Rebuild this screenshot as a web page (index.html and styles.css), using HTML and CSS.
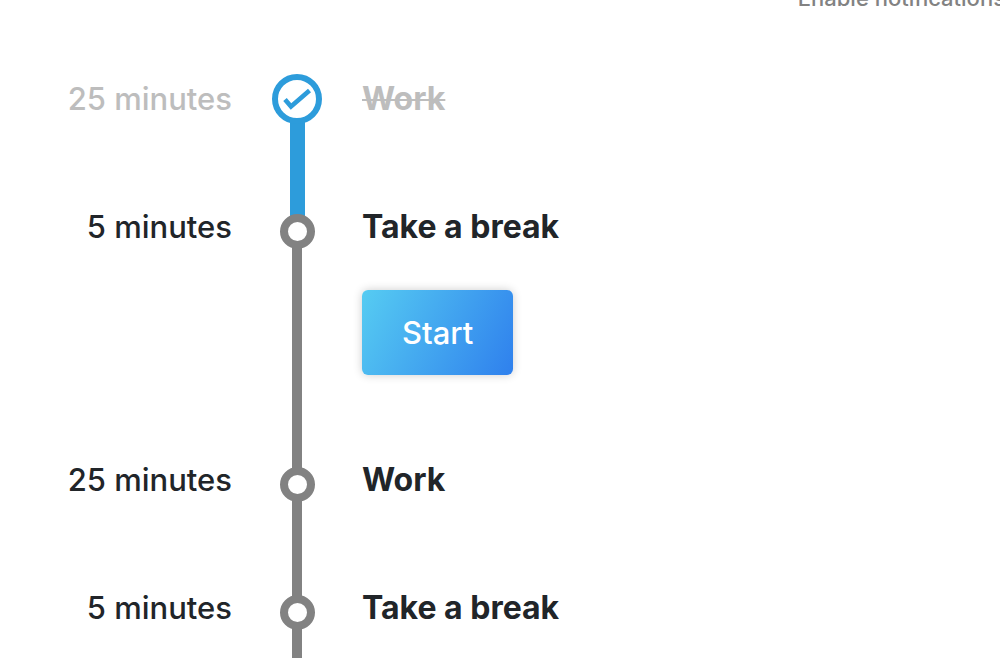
FILE: index.html
```html
<!DOCTYPE html>
<html lang="en">
<head>
<meta charset="utf-8">
<title>Pomodoro timeline</title>
<link rel="stylesheet" href="styles.css">
</head>
<body>
<header class="topbar"><a class="notify" href="#">Enable notifications</a></header>
<main>
<ol class="timeline">
  <li class="step done">
    <span class="time">25 minutes</span>
    <span class="marker">
      <span class="dot">
        <svg class="check" viewBox="0 0 38 38" aria-hidden="true"><path d="M7 19.5 13 26.5 31.5 10.5" fill="none" stroke="#2d9cdb" stroke-width="4.6"/></svg>
      </span>
      <span class="line"></span>
    </span>
    <div class="body"><span class="label">Work</span></div>
  </li>
  <li class="step">
    <span class="time">5 minutes</span>
    <span class="marker"><span class="dot"></span><span class="line"></span></span>
    <div class="body"><span class="label">Take a break</span><button class="start" type="button">Start</button></div>
  </li>
  <li class="step">
    <span class="time">25 minutes</span>
    <span class="marker"><span class="dot"></span><span class="line"></span></span>
    <div class="body"><span class="label">Work</span></div>
  </li>
  <li class="step">
    <span class="time">5 minutes</span>
    <span class="marker"><span class="dot"></span><span class="line"></span></span>
    <div class="body"><span class="label">Take a break</span></div>
  </li>
</ol>
</main>
</body>
</html>
```
FILE: styles.css
```css
* { box-sizing: border-box; }
html { overflow: hidden; }
body {
  margin: 0;
  background: #fff;
  color: #212529;
  font-family: Inter, "Liberation Sans", sans-serif;
  font-size: 32px;
  line-height: 50px;
}
.topbar {
  display: flex;
  justify-content: flex-end;
  height: 74px;
  overflow: hidden;
}
.notify {
  margin: -20px -5px 0 0;
  color: #828282;
  font-size: 22px;
  font-weight: 500;
  line-height: 36px;
  white-space: nowrap;
  text-decoration: none;
}
.timeline { margin: 0; padding: 0; list-style: none; }
.step {
  display: grid;
  grid-template-columns: 232px 130px 1fr;
  min-height: 128px;
}
.time { text-align: right; font-weight: 550; font-size: 31px; }
.marker {
  display: flex;
  flex-direction: column;
  align-items: center;
  padding-top: 12px;
}
.dot {
  position: relative;
  z-index: 1;
  flex: none;
  width: 35px;
  height: 35px;
  border: 8px solid #828282;
  border-radius: 50%;
  background: #fff;
}
.line {
  flex: 1;
  width: 10px;
  margin: -2px 0 -14px;
  background: #828282;
}
.body { display: flex; flex-direction: column; align-items: flex-start; }
.label { font-weight: 700; }
.done .time, .done .label { color: #bdbdbd; }
.done .label { text-decoration: line-through; text-decoration-thickness: 2px; }
.done .marker { padding-top: 0; }
.done .dot { width: 50px; height: 50px; border: 6px solid #2d9cdb; }
.done .line { width: 15px; background: #2d9cdb; }
.check { display: block; width: 38px; height: 38px; }
.start {
  margin: 38px 0 80px;
  padding: 18px 40px 17px;
  border: 0;
  border-radius: 6px;
  background: linear-gradient(117deg, #56ccf2, #2f80ed);
  box-shadow: 0 0 10px rgba(0, 0, 0, .2);
  color: #fff;
  font: inherit;
  font-size: 31px;
  font-weight: 500;
}
```
